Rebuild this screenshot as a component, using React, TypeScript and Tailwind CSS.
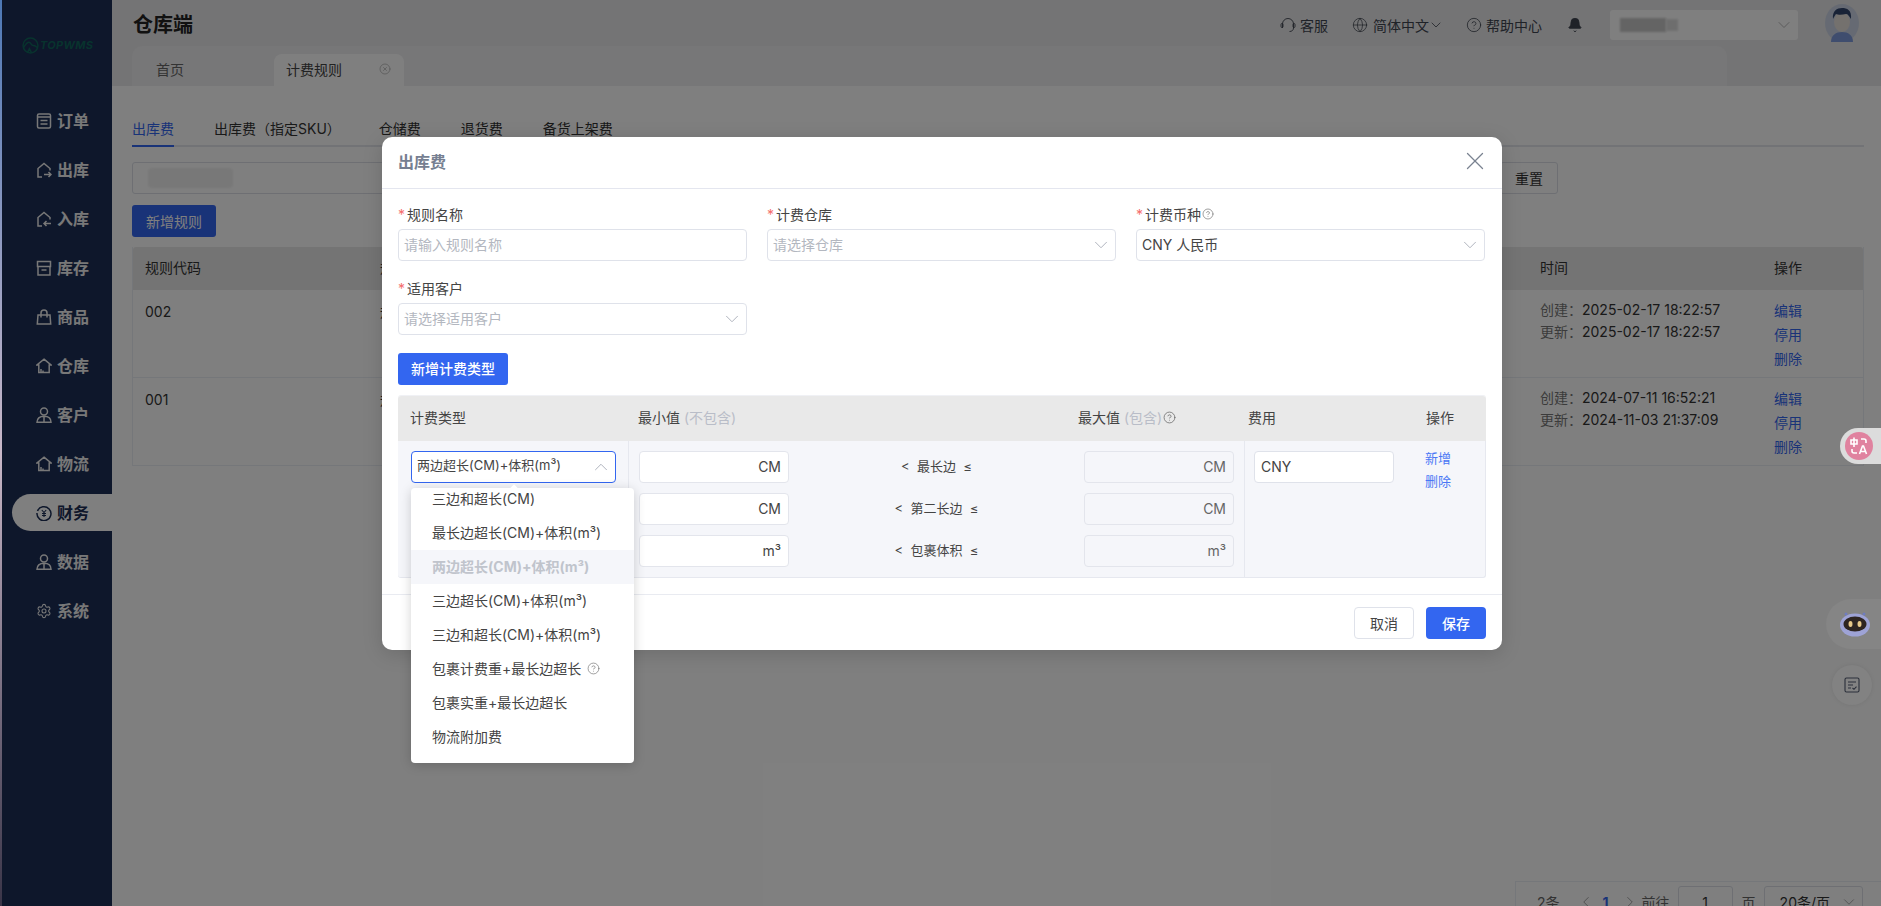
import { Bell, ChevronDown, ChevronLeft, ChevronRight, ChevronUp, CircleHelp, CircleX, Globe, Settings, X } from "lucide-react";

const FONT = "font-['Inter','Noto_Sans_CJK_SC',sans-serif]";

const IconOrder = () => (
  <svg viewBox="0 0 16 16" className="w-4 h-4" fill="none" stroke="currentColor" strokeWidth="1.5">
    <rect x="1.5" y="1" width="13" height="14" rx="1.5" />
    <path d="M1.5 4h13M4.5 7.5h7M4.5 11h7" />
  </svg>
);
const IconOut = () => (
  <svg viewBox="0 0 16 16" className="w-4 h-4" fill="none" stroke="currentColor" strokeWidth="1.5">
    <path d="M6 15H2V6.5L8 1.5l6 5v2" />
    <path d="M8 12.5h7M12.5 10l2.5 2.5-2.5 2.5" />
  </svg>
);
const IconIn = () => (
  <svg viewBox="0 0 16 16" className="w-4 h-4" fill="none" stroke="currentColor" strokeWidth="1.5">
    <path d="M6 15H2V6.5L8 1.5l6 5v2" />
    <path d="M15 12.5H8M10.5 10L8 12.5l2.5 2.5" />
  </svg>
);
const IconStock = () => (
  <svg viewBox="0 0 16 16" className="w-4 h-4" fill="none" stroke="currentColor" strokeWidth="1.5">
    <path d="M1.5 1.5h13v5h-13zM2 6.5V15h12V6.5M5.5 10h5" />
  </svg>
);
const IconGoods = () => (
  <svg viewBox="0 0 16 16" className="w-4 h-4" fill="none" stroke="currentColor" strokeWidth="1.5">
    <path d="M2 6h12l.7 9H1.300zM5 8.500V4a3 3 0 016 0v4.500" />
  </svg>
);
const IconHouse = () => (
  <svg viewBox="0 0 16 16" className="w-4 h-4" fill="none" stroke="currentColor" strokeWidth="1.5">
    <path d="M8 1.200L15 7h-1.800v7.500H2.800V7H1zM5 14v-3M7 14v-1.500" />
  </svg>
);
const IconUser = () => (
  <svg viewBox="0 0 16 16" className="w-4 h-4" fill="none" stroke="currentColor" strokeWidth="1.5">
    <circle cx="8" cy="4.500" r="3.500" />
    <path d="M1 15.200c0-3.500 2.500-6 7-6s7 2.500 7 6zM8 10v5" />
  </svg>
);
const IconMoney = () => (
  <svg viewBox="0 0 16 16" className="w-4 h-4" fill="none" stroke="currentColor" strokeWidth="1.500">
    <path d="M1.500 6A7 7 0 1 1 1 8" />
    <path d="M5.800 5L8 7.500 10.200 5M8 7.500V12M6 8.500h4M6 10.500h4" strokeWidth="1.100" />
  </svg>
);

const menu = [
  { label: "订单", icon: <IconOrder /> },
  { label: "出库", icon: <IconOut /> },
  { label: "入库", icon: <IconIn /> },
  { label: "库存", icon: <IconStock /> },
  { label: "商品", icon: <IconGoods /> },
  { label: "仓库", icon: <IconHouse /> },
  { label: "客户", icon: <IconUser /> },
  { label: "物流", icon: <IconHouse /> },
  { label: "财务", icon: <IconMoney />, active: true },
  { label: "数据", icon: <IconUser /> },
  { label: "系统", icon: <Settings className="w-4 h-4" strokeWidth={1.6} /> },
];

const Sidebar = () => (
  <div className="w-[110px] shrink-0 bg-[#1c2e56] flex flex-col">
    <div className="h-[102px] pt-[37px] pl-[20px] flex items-start gap-[1px] text-[#10665c]">
      <svg viewBox="0 0 16 16" className="w-[17px] h-[17px]" fill="none" stroke="currentColor" strokeWidth="1.4">
        <circle cx="8" cy="8" r="7" />
        <path d="M1.500 10c2-3 3-5 5-5s2 3 4 3 2.500 1 4 2M5 15l2-4 2 4" />
      </svg>
      <span className="text-[11px] leading-[17px] font-bold italic tracking-[0.3px]">TOPWMS</span>
    </div>
    {menu.map((m) => (
      <div
        key={m.label}
        className={`h-[37px] mb-[12px] ml-[10px] pl-[24px] flex items-center gap-[5px] rounded-l-full text-[16px] font-bold ${
          m.active ? "bg-white text-[#1c2e56]" : "text-[#f0f0f0]"
        }`}
      >
        {m.icon}
        <span>{m.label}</span>
      </div>
    ))}
  </div>
);

const TopBar = () => (
  <div className="h-[46px] flex items-center pl-[21px] pt-[4px] bg-[#e8e8ea]">
    <div className="text-[20px] font-bold text-[#222]">仓库端</div>
    <div className="ml-auto flex items-center text-[14px] text-[#3f4550]">
      <svg viewBox="0 0 16 16" className="w-4 h-4 mr-[4px]" fill="none" stroke="currentColor" strokeWidth="0.900">
        <path d="M2.500 11V7a5.500 5.500 0 0111 0v4c0 2-1.500 3.500-4 3.500" />
        <rect x="1" y="6.500" width="2" height="4" rx="1" />
        <rect x="13" y="6.500" width="2" height="4" rx="1" />
      </svg>
      <span>客服</span>
      <Globe className="w-4 h-4 ml-[24px] mr-[5px]" strokeWidth={1.1} />
      <span>简体中文</span>
      <ChevronDown className="w-[16px] h-[16px] -ml-[1px] -mr-[2px]" strokeWidth={1.2} />
      <CircleHelp className="w-4 h-4 ml-[24px] mr-[4px]" strokeWidth={1.2} />
      <span>帮助中心</span>
      <Bell className="w-4 h-4 ml-[25px] fill-[#3f4550]" strokeWidth={1.2} />
      <div className="ml-[27px] w-[188px] h-[30px] -mt-[1px] rounded-[3px] bg-white flex items-center pl-[10px] pr-[4px]">
        <div className="w-[46px] h-[14px] bg-[#c8c8c8] blur-[1px]" />
        <div className="w-[12px] h-[12px] bg-[#dddddd] blur-[1px]" />
        <ChevronDown className="w-[20px] h-[20px] ml-auto text-[#aaa]" strokeWidth={1} />
      </div>
      <svg viewBox="0 0 38 38" className="w-[38px] h-[38px] ml-[25px] mr-[20px] -mt-[4px]">
        <ellipse cx="19" cy="19" rx="17" ry="19" fill="#cdd5e6" />
        <path d="M8 38c0-7 5-10 11-10s11 3 11 10z" fill="#7f9bdc" />
        <ellipse cx="19" cy="18" rx="8" ry="10" fill="#e8e2dd" />
        <path d="M10 15c-1-8 4-11 9-11s10 2 9 11c-2-3-3-5-5-5-4 1-8 1-10 0-1 1-2 3-3 5z" fill="#33466e" />
      </svg>
    </div>
  </div>
);

const TabBar = () => (
  <div className="h-[40px] bg-[#e8e8ea]">
    <div className="ml-[20px] w-[1595px] h-[40px] rounded-t-[10px] bg-[#eeeef0] flex items-end text-[14px] text-[#666]">
      <div className="w-[142px] h-[32px] pl-[24px] pb-[2px] flex items-center">首页</div>
      <div className="w-[130px] h-[32px] bg-white rounded-t-[8px] pl-[12px] pr-[8px] pb-[2px] flex items-center text-[#444]">
        计费规则
        <CircleX className="w-[12px] h-[12px] ml-auto mr-[5px] text-[#aaa]" strokeWidth={1.4} />
      </div>
    </div>
  </div>
);

const rows = [
  { code: "002", created: "2025-02-17 18:22:57", updated: "2025-02-17 18:22:57" },
  { code: "001", created: "2024-07-11 16:52:21", updated: "2024-11-03 21:37:09" },
];

const Page = () => (
  <div className="flex-1 flex flex-col min-w-0 bg-white">
    <TopBar />
    <TabBar />
    <div className="flex-1 min-h-0 overflow-hidden pl-[20px] pr-[17px] flex flex-col text-[14px] text-[#333]">
      <div className="flex shrink-0 gap-10 mt-[32px] border-b-2 border-[#e4e7ed] h-[29px]">
        <div className="h-[29px] border-b-2 border-[#3366f0] text-[#3366f0]">出库费</div>
        <div className="-mr-[2px]">出库费（指定SKU）</div>
        <div>仓储费</div>
        <div>退货费</div>
        <div>备货上架费</div>
      </div>
      <div className="flex shrink-0 mt-[15px]">
        <div className="w-[1340px] h-[32px] border border-[#dcdfe6] rounded-[3px] pl-[15px] flex items-center">
          <div className="w-[85px] h-[20px] bg-[#f0f0f0] rounded blur-[1px]" />
        </div>
        <div className="ml-[28px] w-[58px] h-[32px] border border-[#dcdfe6] rounded-[3px] flex items-center justify-center">重置</div>
      </div>
      <div className="mt-[11px] shrink-0 w-[84px] h-[32px] rounded-[3px] bg-[#3366f0] text-white flex items-center justify-center">新增规则</div>
      <div className="mt-[10px] shrink-0 border-x border-[#ebeef5]">
        <div className="grid grid-cols-[247px_1160px_234px_1fr] h-[43px] pb-[2px] items-center bg-[#e9e9e9] rounded-t-[3px]">
          <div className="pl-[12px]">规则代码</div>
          <div>规则名称</div>
          <div>时间</div>
          <div>操作</div>
        </div>
        {rows.map((r) => (
          <div key={r.code} className="grid grid-cols-[247px_1160px_234px_1fr] h-[88px] border-b border-[#ebeef5]">
            <div className="pl-[12px] pt-[11px]">{r.code}</div>
            <div className="pt-[11px]">规则</div>
            <div className="pt-[9px] leading-[22px]">
              <div><span className="text-[#777]">创建：</span>{r.created}</div>
              <div><span className="text-[#777]">更新：</span>{r.updated}</div>
            </div>
            <div className="pt-[9px] leading-[24px] text-[#3366f0]">
              <div>编辑</div>
              <div>停用</div>
              <div>删除</div>
            </div>
          </div>
        ))}
      </div>
      <div className="mt-[415px] -mr-[17px] ml-auto w-[366px] shrink-0 border-t border-l border-[#ebeef5] pt-[4px] pl-[21px] flex items-center text-[#666]">
        <span>2条</span>
        <ChevronLeft className="w-[18px] h-[18px] ml-[17px] text-[#999]" strokeWidth={1.2} />
        <span className="ml-[8px] font-bold text-[#3366f0]">1</span>
        <ChevronRight className="w-[18px] h-[18px] ml-[12px] text-[#999]" strokeWidth={1.2} />
        <span className="ml-[3px]">前往</span>
        <div className="ml-[8px] w-[55px] h-[32px] border border-[#dcdfe6] rounded-[3px] flex items-center justify-center text-[#333]">1</div>
        <span className="ml-[9px]">页</span>
        <div className="ml-[8px] w-[99px] h-[32px] border border-[#dcdfe6] rounded-[3px] pl-[15px] pr-[4px] flex items-center text-[#333]">
          20条/页
          <ChevronDown className="w-[18px] h-[18px] ml-auto text-[#999]" strokeWidth={1.1} />
        </div>
      </div>
    </div>
  </div>
);

const Field = ({ label, help, children }: { label: string; help?: boolean; children: React.ReactNode }) => (
  <div>
    <div className="h-[20px] pb-[2px] flex items-center text-[14px] text-[#444] mb-[4px]">
      <span className="text-[#f56c6c] w-[9px]">*</span>
      {label}
      {help && <CircleHelp className="w-[12px] h-[12px] ml-[1px] text-[#777]" strokeWidth={1.4} />}
    </div>
    {children}
  </div>
);

const Box = ({ text, placeholder, arrow }: { text: string; placeholder?: boolean; arrow?: boolean }) => (
  <div className={`h-[32px] border border-[#dfe2ea] rounded-[4px] pl-[5px] pr-[3px] pb-[2px] flex items-center text-[14px] bg-white ${placeholder ? "text-[#b3b7c0]" : "text-[#444]"}`}>
    {text}
    {arrow && <ChevronDown className="w-[22px] h-[22px] ml-auto mt-[2px] text-[#a8adb8]" strokeWidth={1} />}
  </div>
);

const options = [
  "三边和超长(CM)",
  "最长边超长(CM)+体积(m³)",
  "两边超长(CM)+体积(m³)",
  "三边超长(CM)+体积(m³)",
  "三边和超长(CM)+体积(m³)",
  "包裹计费重+最长边超长",
  "包裹实重+最长边超长",
  "物流附加费",
];

const Dropdown = () => (
  <div className="absolute -left-[1px] top-[36px] w-[223px] h-[275px] bg-white rounded-[4px] shadow-[0_2px_12px_rgba(0,0,0,0.18)] z-20">
    <div className="absolute left-[99px] -top-[2px] w-[8px] h-[8px] rotate-45 bg-white" />
    <div className="relative h-full overflow-hidden rounded-[4px]">
      <div className="-mt-[6px] flex flex-col">
        {options.map((o, i) => (
          <div
            key={o}
            className={`h-[34px] shrink-0 pl-[21px] pb-[2px] flex items-center text-[14px] ${
              i === 2 ? "bg-[#f5f6fa] text-[#c0c4cc] font-bold" : "text-[#444]"
            }`}
          >
            {o}
            {i === 5 && <CircleHelp className="w-[13px] h-[13px] ml-[6px] text-[#777]" strokeWidth={1.3} />}
          </div>
        ))}
      </div>
    </div>
  </div>
);

const limits = [
  { unit: "CM", label: "最长边" },
  { unit: "CM", label: "第二长边" },
  { unit: "m³", label: "包裹体积" },
];

const FeeTable = () => (
  <div className="mt-[10px] w-[1088px] rounded-[3px] border-t border-[#f0f1f5] text-[14px] text-[#444]">
    <div className="grid grid-cols-[228px_440px_170px_178px_1fr] h-[45px] pb-[2px] items-center bg-[#e9e9e9] rounded-t-[3px]">
      <div className="pl-3">计费类型</div>
      <div className="pl-3">最小值 <span className="text-[#b9bdc8]">(不包含)</span></div>
      <div className="pl-3 flex items-center">
        最大值 <span className="text-[#b9bdc8] ml-[4px]">(包含)</span>
        <CircleHelp className="w-[13px] h-[13px] ml-[1px] text-[#666]" strokeWidth={1.4} />
      </div>
      <div className="pl-3">费用</div>
      <div className="pl-3">操作</div>
    </div>
    <div className="flex bg-[#f5f6fa] border-b border-r border-[#e6e8ef] rounded-b-[3px]">
      <div className="w-[230px] shrink-0 pl-[13px] py-[10px]">
        <div className="relative w-[205px] h-[32px] bg-white border border-[#3366f0] rounded-[4px] pl-[5px] pr-[3px] flex items-center text-[13px]">
          <span className="pb-[2px]">两边超长(CM)+体积(m³)</span>
          <ChevronUp className="w-[22px] h-[22px] ml-auto text-[#a8adb8]" strokeWidth={1} />
          <Dropdown />
        </div>
      </div>
      <div className="w-[617px] shrink-0 border-x border-[#e6e8ef] px-[10px] py-[10px] flex flex-col gap-[10px]">
        {limits.map((l) => (
          <div key={l.label} className="flex items-center">
            <div className="w-[150px] h-[32px] pb-[1px] bg-white border border-[#e3e5ec] rounded-[4px] pr-[7px] flex items-center justify-end">{l.unit}</div>
            <div className="flex-1 pb-[1px] text-center text-[13px] whitespace-pre">{`<  ${l.label}  ≤`}</div>
            <div className="w-[150px] h-[32px] pb-[1px] border border-[#e3e5ec] rounded-[4px] pr-[7px] flex items-center justify-end text-[#666]">{l.unit}</div>
          </div>
        ))}
      </div>
      <div className="pl-[9px] pt-[10px] flex">
        <div className="w-[140px] h-[32px] pb-[1px] bg-white border border-[#dfe2ea] rounded-[4px] pl-[6px] flex items-center">CNY</div>
        <div className="ml-[31px] text-[13px] text-[#4a78f5] leading-[23px] -mt-[4px]">
          <div>新增</div>
          <div>删除</div>
        </div>
      </div>
    </div>
  </div>
);

const Modal = () => (
  <div className="ml-[380px] mt-[137px] w-[1120px] h-[513px] bg-white rounded-[10px] shadow-[0_4px_20px_rgba(0,0,0,0.15)] flex flex-col">
    <div className="h-[52px] shrink-0 border-b border-[#e4e6ef] pl-[16px] pr-[12px] flex items-center justify-between">
      <span className="text-[16px] pb-[2px] font-bold text-[#767f91]">出库费</span>
      <X className="w-[30px] h-[30px] mb-[4px] text-[#7a8290]" strokeWidth={1} />
    </div>
    <div className="flex-1 px-[16px] pt-[16px]">
      <div className="grid grid-cols-[349px_349px_349px] gap-x-[20px] gap-y-[18px]">
        <Field label="规则名称"><Box text="请输入规则名称" placeholder /></Field>
        <Field label="计费仓库"><Box text="请选择仓库" placeholder arrow /></Field>
        <Field label="计费币种" help><Box text="CNY 人民币" arrow /></Field>
        <Field label="适用客户"><Box text="请选择适用客户" placeholder arrow /></Field>
      </div>
      <div className="mt-[18px] w-[110px] h-[32px] pb-[1px] rounded-[3px] bg-[#3366f0] text-white text-[14px] font-medium flex items-center justify-center">新增计费类型</div>
      <FeeTable />
    </div>
    <div className="h-[56px] shrink-0 border-t border-[#e9ebf1] pr-[16px] pt-[12px] flex justify-end gap-[12px] text-[14px]">
      <div className="w-[60px] h-[32px] border border-[#dfe2ea] rounded-[4px] text-[#444] flex items-center justify-center">取消</div>
      <div className="w-[60px] h-[32px] rounded-[4px] bg-[#3366f0] text-white font-medium flex items-center justify-center">保存</div>
    </div>
  </div>
);

const Floats = () => (
  <>
    <div className="absolute right-0 top-[428px] w-[41px] h-[36px] rounded-l-full bg-[#dcdcdc] pl-[5px] flex items-center">
      <div className="w-[28px] h-[28px] rounded-full bg-[#e0829f] text-white flex items-center justify-center">
        <svg viewBox="0 0 20 20" className="w-[20px] h-[20px]" fill="none" stroke="currentColor" strokeWidth="1.600">
          <path d="M2 4h6v4H2zM5 1.500V11" />
          <path d="M12 3h3a2 2 0 012 2v2M3 13v2a2 2 0 002 2h3" />
          <path d="M10.500 18l3-8h1l3 8M11.700 15.500h4.600" />
        </svg>
      </div>
    </div>
    <div className="absolute right-0 top-[599px] w-[55px] h-[50px] rounded-l-[25px] bg-[#858585] flex items-center pl-[14px]">
      <svg viewBox="0 0 30 26" className="w-[30px] h-[26px]">
        <circle cx="6" cy="3" r="1.500" fill="#6f7cc0" />
        <circle cx="24" cy="3" r="1.500" fill="#6f7cc0" />
        <ellipse cx="15" cy="14" rx="15" ry="11.500" fill="#9ea3d6" />
        <ellipse cx="15" cy="13" rx="11.500" ry="7.500" fill="#2e2522" />
        <ellipse cx="10.500" cy="13" rx="2" ry="3" fill="#e8c98a" />
        <ellipse cx="19.500" cy="13" rx="2" ry="3" fill="#e8c98a" />
      </svg>
    </div>
    <div className="absolute left-[1832px] top-[665px] w-[40px] h-[40px] rounded-full bg-[#828282] shadow-[0_0_4px_rgba(0,0,0,0.08)] flex items-center justify-center">
      <svg viewBox="0 0 16 16" className="w-[16px] h-[16px]" fill="none" stroke="#2b2f3a" strokeWidth="1.100">
        <rect x="1" y="1" width="14" height="14" rx="1.500" />
        <path d="M4 5h8M4 8h5M4 11h3M8.500 11l1.500 1.300 2.500-2.600" />
      </svg>
    </div>
  </>
);

export default function App() {
  return (
    <div className={`relative w-[1881px] h-[906px] overflow-hidden flex ${FONT}`}>
      <div className="w-[2px] shrink-0 bg-linear-to-b from-[#4d78b5] via-[#c9b8c8] to-[#3a3548]" />
      <Sidebar />
      <Page />
      <div className="absolute inset-y-0 left-[2px] right-0 bg-black/50">
        <Modal />
      </div>
      <Floats />
    </div>
  );
}
